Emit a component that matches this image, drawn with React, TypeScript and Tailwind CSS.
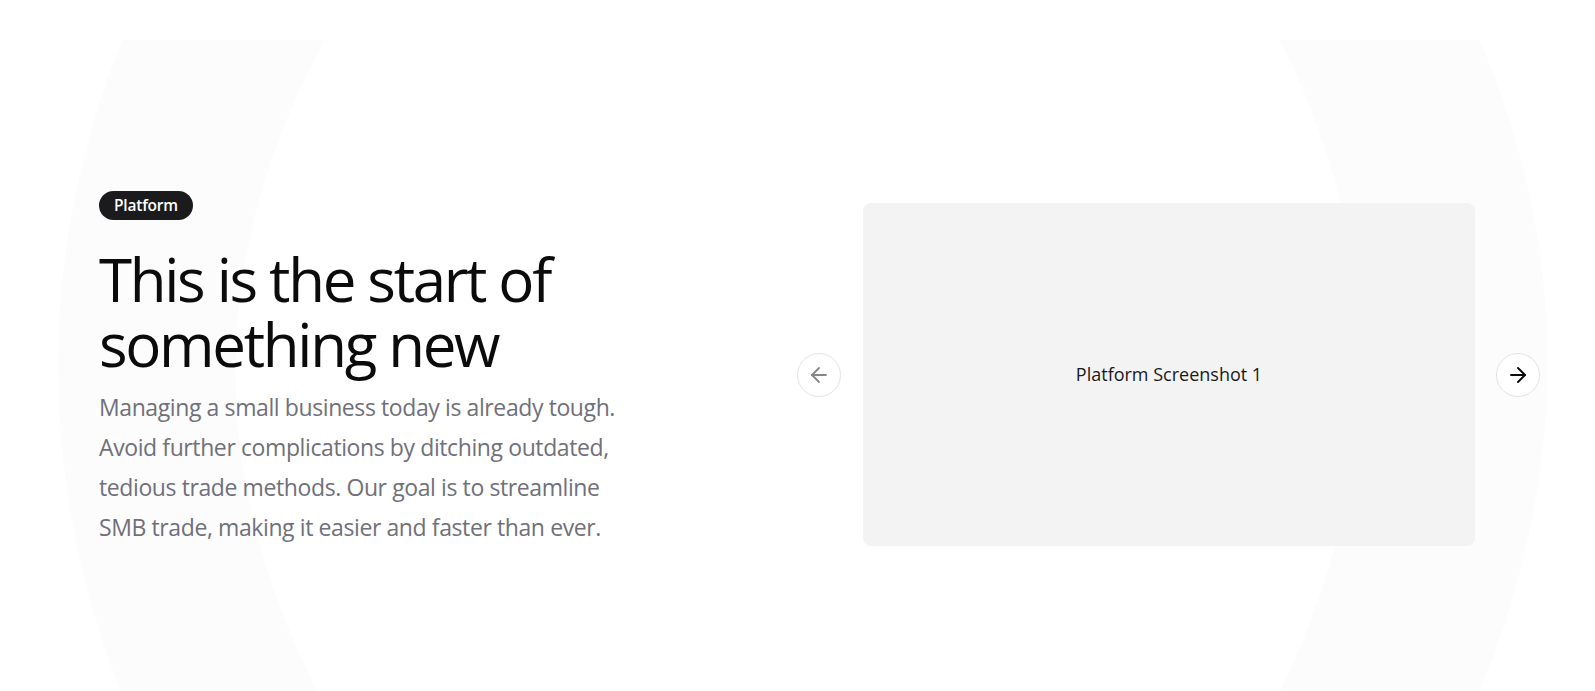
import { ArrowLeft, ArrowRight } from 'lucide-react'

function BackdropShapes() {
  return (
    <svg className="absolute inset-0 w-full h-full pointer-events-none" viewBox="0 0 1595 691" preserveAspectRatio="none">
      <path d="M122 40 L325 40 Q150 360 317 691 L120 691 Q-5 360 122 40 Z" fill="#fcfcfc" />
      <path d="M1280 40 L1480 40 Q1615 360 1480 691 L1280 691 Q1440 360 1280 40 Z" fill="#fcfcfc" />
    </svg>
  )
}

export default function App() {
  return (
    <div className="relative w-full h-[691px] bg-white overflow-hidden" style={{ fontFamily: '"Open Sans", "Noto Sans", sans-serif' }}>
      <BackdropShapes />
      <div className="relative flex items-start pl-[99px]">
        <div className="w-[560px] mt-[191px] flex flex-col">
          <span className="self-start rounded-full bg-[#1b1b1d] px-[15px] h-[29px] flex items-center text-[15.5px] font-semibold tracking-[-0.2px] text-white">
            Platform
          </span>
          <h1 className="mt-[27px] text-[60px] leading-[65px] font-normal tracking-[-2.3px] text-[#0b0b0b]">
            This is the start of<br />something new
          </h1>
          <p className="mt-[10px] max-w-[540px] text-[23px] leading-[40px] tracking-[-0.4px] text-[#70707a]">
            Managing a small business today is already tough. Avoid further complications by ditching outdated,
            tedious trade methods. Our goal is to streamline SMB trade, making it easier and faster than ever.
          </p>
        </div>
        <div className="relative ml-[204px] mt-[203px] w-[612px]">
          <div className="h-[343px] rounded-lg bg-[#f3f3f3] flex items-center justify-center">
            <span className="text-[18px] text-[#1a1a1a]">Platform Screenshot 1</span>
          </div>
          <button className="absolute -left-[66px] top-1/2 -translate-y-1/2 w-11 h-11 rounded-full border border-[#e4e4e7] bg-white flex items-center justify-center text-[#85858a]">
            <ArrowLeft size={24} strokeWidth={1.8} />
          </button>
          <button className="absolute -right-[65px] top-1/2 -translate-y-1/2 w-11 h-11 rounded-full border border-[#e4e4e7] bg-white flex items-center justify-center text-[#0b0b0b]">
            <ArrowRight size={24} strokeWidth={1.9} />
          </button>
        </div>
      </div>
    </div>
  )
}
